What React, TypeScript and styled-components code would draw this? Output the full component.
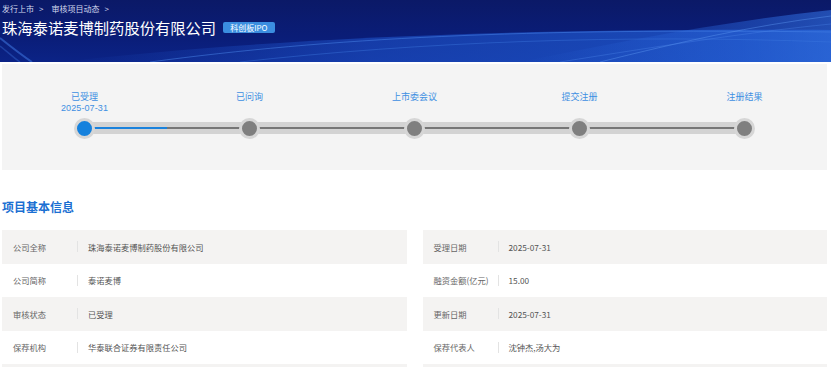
import styled, { createGlobalStyle } from "styled-components"

const GlobalStyle = createGlobalStyle`
	html, body {
		margin: 0;
		padding: 0;
		background: #ffffff;
		font-family: "Noto Sans CJK SC", "Noto Sans", sans-serif;
	}
`

const steps = [
	{ name: "已受理", date: "2025-07-31", done: true },
	{ name: "已问询", date: "", done: false },
	{ name: "上市委会议", date: "", done: false },
	{ name: "提交注册", date: "", done: false },
	{ name: "注册结果", date: "", done: false },
]

// the fifth row only peeks in at the bottom edge of the view
const leftRows = [
	["公司全称", "珠海泰诺麦博制药股份有限公司"],
	["公司简称", "泰诺麦博"],
	["审核状态", "已受理"],
	["保荐机构", "华泰联合证券有限责任公司"],
	["", ""],
]

const rightRows = [
	["受理日期", "2025-07-31"],
	["融资金额(亿元)", "15.00"],
	["更新日期", "2025-07-31"],
	["保荐代表人", "沈钟杰,汤大为"],
	["", ""],
]

const Header = styled.header`
	position: relative;
	height: 62px;
	overflow: hidden;
	background: linear-gradient(180deg, #0b1967 0%, #0a1d78 60%, #0b2386 100%);
`

const Waves = styled.svg`
	position: absolute;
	inset: 0;
	width: 100%;
	height: 100%;
`

const HeaderInner = styled.div`
	position: relative;
	padding: 3px 2px 0;
	color: #ffffff;
`

const Breadcrumb = styled.div`
	display: flex;
	align-items: center;
	gap: 5px;
	font-size: 8px;
	line-height: 11px;
	color: #d3d9ee;
`

const Crumb = styled.span`
	margin-right: 3px;
`

const TitleRow = styled.div`
	display: flex;
	align-items: center;
	gap: 7px;
	margin-top: 2px;
	height: 22px;
`

const Title = styled.h1`
	margin: 0;
	font-size: 15.3px;
	font-weight: 400;
	line-height: 22px;
	color: #ffffff;
	white-space: nowrap;
`

const Badge = styled.span`
	display: inline-flex;
	align-items: center;
	height: 11px;
	padding: 0 7px;
	border-radius: 2px;
	background: #3b8ee0;
	color: #ffffff;
	font-size: 8px;
	line-height: 11px;
	margin-top: 1px;
`

const Content = styled.main`
	padding: 2px 4px 0 2px;
`

const StepPanel = styled.section`
	background: #f4f4f4;
	padding: 27.5px 0 32px;
`

const StepLabels = styled.div`
	display: grid;
	grid-template-columns: repeat(5, 1fr);
	height: 26.5px;
`

const StepLabel = styled.div`
	display: flex;
	flex-direction: column;
	align-items: center;
	font-size: 9px;
	line-height: 10px;
	color: #3d8fe2;
`

const StepDate = styled.span`
	margin-top: 1px;
	font-family: "Liberation Sans", "Noto Sans", sans-serif;
	font-size: 9px;
	line-height: 10.5px;
	letter-spacing: 0.1px;
`

const Track = styled.div`
	position: relative;
	height: 20px;
`

const Band = styled.div`
	position: absolute;
	left: 10%;
	right: 10%;
	top: 4px;
	height: 12px;
	background: #d3d3d3;
	display: flex;
	align-items: center;
`

const BandLine = styled.div<{ $active?: boolean }>`
	height: 2px;
	flex: ${(p) => (p.$active ? "0 0 12.5%" : "1")};
	background: ${(p) => (p.$active ? "#1a82dc" : "#767676")};
`

const Nodes = styled.div`
	position: relative;
	display: grid;
	grid-template-columns: repeat(5, 1fr);
	height: 20px;
`

const NodeCell = styled.div`
	display: flex;
	align-items: center;
	justify-content: center;
`

const Node = styled.span<{ $active: boolean }>`
	width: 15px;
	height: 15px;
	border-radius: 50%;
	border: 3px solid #d6d6d6;
	background: ${(p) => (p.$active ? "#1581dd" : "#7f7f7f")};
`

const SectionTitle = styled.h2`
	margin: 29px 0 15px;
	font-size: 12px;
	line-height: 16px;
	font-weight: 700;
	color: #1b6fd2;
`

const InfoGrid = styled.div`
	display: grid;
	grid-template-columns: 1fr 1fr;
	column-gap: 16px;
`

const InfoList = styled.div`
	display: flex;
	flex-direction: column;
`

const InfoRow = styled.div<{ $shaded: boolean }>`
	display: flex;
	align-items: center;
	height: 33.5px;
	background: ${(p) => (p.$shaded ? "#f4f3f2" : "#ffffff")};
	font-size: 8.25px;
	color: #555555;
`

const Label = styled.span`
	width: 64px;
	margin-left: 11px;
	color: #666666;
	white-space: nowrap;
`

const Divider = styled.span`
	width: 1px;
	height: 11px;
	background: #e3e3e3;
`

const Value = styled.span`
	padding-left: 10px;
	white-space: nowrap;
`

const WaveArt = () => (
	<Waves viewBox="0 0 831 62" preserveAspectRatio="none">
		<defs>
			<linearGradient id="glow" x1="0" y1="0" x2="1" y2="0">
				<stop offset="0" stopColor="#1d4fc4" stopOpacity="0" />
				<stop offset="0.4" stopColor="#1d50c6" stopOpacity="0.6" />
				<stop offset="1" stopColor="#1f58cc" stopOpacity="0.85" />
			</linearGradient>
			<linearGradient id="glow2" x1="0" y1="0" x2="1" y2="0">
				<stop offset="0" stopColor="#2a66dc" stopOpacity="0" />
				<stop offset="0.7" stopColor="#2a66dc" stopOpacity="0.45" />
				<stop offset="1" stopColor="#3270e0" stopOpacity="0.6" />
			</linearGradient>
		</defs>
		<path d="M60 62 C 260 40, 480 28, 831 30 L 831 62 Z" fill="url(#glow)" />
		<path d="M520 62 C 620 42, 720 22, 831 10 L 831 62 Z" fill="url(#glow2)" />
		<path d="M150 62 C 330 38, 520 28, 831 32" fill="none" stroke="#4a86ea" strokeOpacity="0.5" strokeWidth="1" />
		<path d="M240 62 C 420 42, 620 34, 831 42" fill="none" stroke="#3f7ae2" strokeOpacity="0.4" strokeWidth="1" />
		<path d="M600 62 C 680 42, 750 26, 831 16" fill="none" stroke="#5b95f0" strokeOpacity="0.45" strokeWidth="1" />
		<path d="M560 62 C 660 46, 750 32, 831 24" fill="none" stroke="#4d88ec" strokeOpacity="0.35" strokeWidth="1" />
		<path d="M0 38 C 10 46, 20 54, 32 62" fill="none" stroke="#3a6fd8" strokeOpacity="0.6" strokeWidth="2" />
		<path d="M0 46 C 8 52, 14 58, 20 62" fill="none" stroke="#3a6fd8" strokeOpacity="0.4" strokeWidth="1.5" />
	</Waves>
)

export default function App() {
	return (
		<>
			<GlobalStyle />
			<Header>
				<WaveArt />
				<HeaderInner>
					<Breadcrumb>
						<span>发行上市</span>
						<Crumb>&gt;</Crumb>
						<span>审核项目动态</span>
						<span>&gt;</span>
					</Breadcrumb>
					<TitleRow>
						<Title>珠海泰诺麦博制药股份有限公司</Title>
						<Badge>科创板IPO</Badge>
					</TitleRow>
				</HeaderInner>
			</Header>

			<Content>
				<StepPanel>
					<StepLabels>
						{steps.map((s) => (
							<StepLabel key={s.name}>
								<span>{s.name}</span>
								{s.date && <StepDate>{s.date}</StepDate>}
							</StepLabel>
						))}
					</StepLabels>
					<Track>
						<Band>
							<BandLine $active />
							<BandLine />
						</Band>
						<Nodes>
							{steps.map((s) => (
								<NodeCell key={s.name}>
									<Node $active={s.done} />
								</NodeCell>
							))}
						</Nodes>
					</Track>
				</StepPanel>

				<SectionTitle>项目基本信息</SectionTitle>

				<InfoGrid>
					{[leftRows, rightRows].map((rows, col) => (
						<InfoList key={col}>
							{rows.map(([label, value], i) => (
								<InfoRow key={i} $shaded={i % 2 === 0}>
									<Label>{label}</Label>
									<Divider />
									<Value>{value}</Value>
								</InfoRow>
							))}
						</InfoList>
					))}
				</InfoGrid>
			</Content>
		</>
	)
}
